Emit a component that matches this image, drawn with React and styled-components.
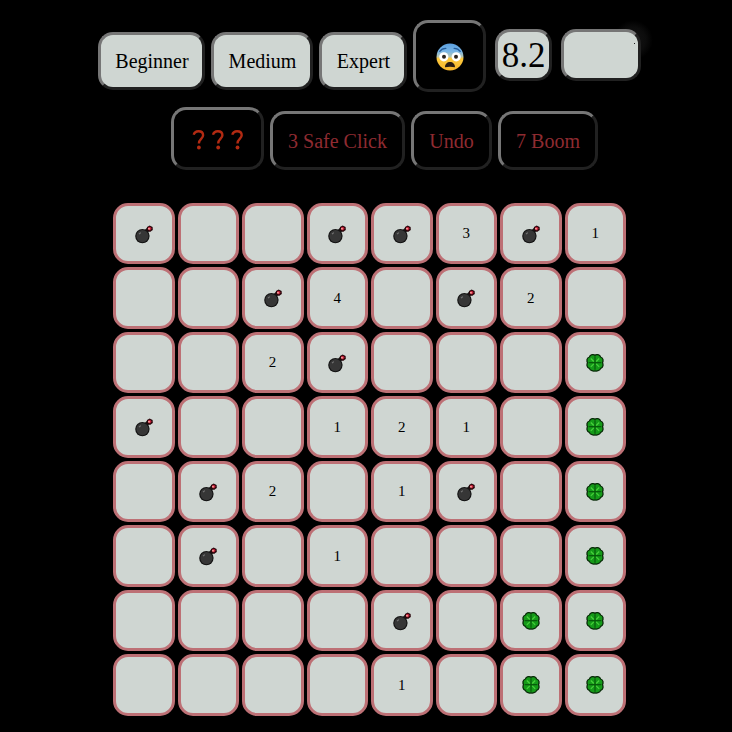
import React from 'react';
import styled, { createGlobalStyle, css } from 'styled-components';

const GlobalStyle = createGlobalStyle`
  body {
    margin: 0;
    background: #000;
    font-family: 'Liberation Serif', 'Times New Roman', serif;
    overflow: hidden;
  }
`;

const Page = styled.main`
  box-sizing: border-box;
  width: 732px;
  height: 732px;
  padding-top: 20px;
  overflow: hidden;
  background: #000;
`;

const bevel = css`
  box-sizing: border-box;
  border: 3px solid;
  border-color: #767676 #212121 #212121 #767676;
`;

const TopBar = styled.header`
  display: flex;
  align-items: flex-start;
  height: 87px;
  padding-left: 98px;
`;

const LevelButton = styled.button`
  ${bevel}
  width: ${(p) => p.$width}px;
  height: 58px;
  margin: 12px 6px 0 0;
  padding: 0 0 0 1px;
  border-radius: 15px;
  background: #cfd6d2;
  color: #000;
  font: 20px 'Liberation Serif', serif;
  white-space: nowrap;
`;

const FaceButton = styled.button`
  ${bevel}
  display: flex;
  align-items: center;
  justify-content: center;
  width: 73px;
  height: 72px;
  padding: 2px 0 0;
  border-radius: 15px;
  background: #000;
`;

const Display = styled.div`
  ${bevel}
  width: ${(p) => p.$width}px;
  height: 52px;
  margin: 9px 0 0 9px;
  border-radius: 15px;
  background: #cfd6d2;
  color: #000;
  font-size: 35px;
  line-height: 48px;
  text-align: center;
`;

const MarkedDisplay = styled(Display)`
  position: relative;

  &::after {
    content: '';
    position: absolute;
    top: 11px;
    right: 3px;
    width: 1px;
    height: 1px;
    background: #222;
  }

  &::before {
    content: '';
    position: absolute;
    z-index: -1;
    top: -12px;
    right: -15px;
    width: 40px;
    height: 40px;
    background: radial-gradient(circle, #141414 0, #0c0c0c 45%, transparent 70%);
  }
`;

const Header = styled.div`
  isolation: isolate;
`;

const ToolBar = styled.nav`
  display: flex;
  align-items: flex-end;
  gap: 6px;
  height: 63px;
  padding-left: 171px;
`;

const ToolButton = styled.button`
  ${bevel}
  display: flex;
  align-items: center;
  justify-content: center;
  width: ${(p) => p.$width}px;
  height: ${(p) => p.$height || 59}px;
  padding: 1px 0 0;
  border-radius: 15px;
  background: #000;
  color: #8f2b31;
  font: 20px 'Liberation Serif', serif;
  white-space: nowrap;
`;

const Board = styled.section`
  display: grid;
  grid-template-columns: repeat(8, 61.5px);
  grid-auto-rows: 61.45px;
  gap: 3.05px;
  margin: 33px 0 0 113px;
`;

const Cell = styled.div`
  box-sizing: border-box;
  display: flex;
  align-items: center;
  justify-content: center;
  padding-right: 0.5px;
  border: 3px solid #bd7075;
  border-radius: 15px;
  background: #cfd6d2;
  color: #000;
  font-size: 15px;
  line-height: 17px;
`;

const Icon = styled.svg`
  display: block;
  flex: none;
  overflow: visible;
`;

const Fearful = () => (
  <Icon width="28" height="28" viewBox="0 0 28 28">
    <defs>
      <linearGradient id="skin" x1="0" y1="0" x2="0" y2="1">
        <stop offset="0" stopColor="#5b9fe0" />
        <stop offset=".3" stopColor="#79b5e5" />
        <stop offset=".48" stopColor="#b5c6b4" />
        <stop offset=".56" stopColor="#fdc93c" />
        <stop offset="1" stopColor="#f9b62e" />
      </linearGradient>
    </defs>
    <circle cx="14" cy="14" r="13.5" fill="url(#skin)" />
    <path d="M3.8 8.4Q5.8 5.5 9.8 5.4M24.2 8.4Q22.2 5.5 18.2 5.4" fill="none" stroke="#235b9a" strokeWidth="1.3" strokeLinecap="round" />
    <circle cx="7.8" cy="13.8" r="4.6" fill="#fff" />
    <circle cx="20.2" cy="13.8" r="4.6" fill="#fff" />
    <circle cx="8" cy="13.8" r="2" fill="#2b2420" />
    <circle cx="20" cy="13.8" r="2" fill="#2b2420" />
    <path d="M9 24.2C9 21 11.2 19 14 19S19 21 19 24.2Q14 23.4 9 24.2Z" fill="#2b1c12" />
  </Icon>
);

const Questions = () => (
  <Icon width="54" height="22" viewBox="-0.5 -1.2 54 22">
    {[0, 19.3, 38.6].map((x) => (
      <g key={x} transform={`translate(${x} 0)`}>
        <path d="M2.2 5.6C2.8 3.2 4.6 2 7 2C10 2 11.6 3.6 11.6 6C11.6 9.6 7.4 9.8 7.4 14.2" fill="none" stroke="#b22a12" strokeWidth="2.4" />
        <circle cx="7.4" cy="18.3" r="1.9" fill="#b22a12" />
      </g>
    ))}
  </Icon>
);

const Bomb = () => (
  <Icon width="18" height="18" viewBox="0 -0.4 18 18">
    <path d="M10.5 6.8L13.5 3.8" stroke="#161616" strokeWidth="4" />
    <circle cx="7.4" cy="10.7" r="7.2" fill="#131313" />
    <circle cx="7.4" cy="10.7" r="6.1" fill="#363636" />
    <path d="M4 8.7L5.8 7.2" stroke="#777" strokeWidth="1.2" />
    <path d="M11.6 4.8L12 1.6L14.6 .2L17.6 1.6L17.8 4.6L15 6.6Z" fill="#29070b" />
    <path d="M13 2.2L15 1.3L16.7 3.2L15 5.2L13.2 4.2Z" fill="#c8203a" />
    <path d="M13.2 2.6h1.5v1.5h-1.5z" fill="#ffb7ad" />
  </Icon>
);

const Clover = () => (
  <Icon width="18" height="18" viewBox="0 0.3 18 18">
    <path
      d="M9 1.6Q10 .6 12 1Q14 1.4 14.7 3.3Q16.6 4 17 6Q17.2 8 16.4 9Q17.2 10 17 12Q16.6 14 14.7 14.7Q14 16.6 12 17Q10.2 17.8 9 17Q7.8 17.8 6 17Q4 16.6 3.3 14.7Q1.4 14 1 12Q.8 10 1.6 9Q.8 8 1 6Q1.4 4 3.3 3.3Q4 1.4 6 1Q8 .6 9 1.6Z"
      fill="#159a19"
      stroke="#082b08"
      strokeWidth="1.3"
    />
    <path d="M9 2.5V16M3 9H15" stroke="#075b0b" strokeWidth="1.2" />
    <path d="M4.8 4.8L7.8 7.8M13.2 4.8L10.2 7.8M4.8 13.2L7.8 10.2M13.2 13.2L10.2 10.2" stroke="#48d13c" strokeWidth="1.2" />
  </Icon>
);

const rows = ['B..BB3B1', '..B4.B2.', '..2B...C', 'B..121.C', '.B2.1B.C', '.B.1...C', '....B.CC', '....1.CC'];

const cellContent = (value) => {
  if (value === 'B') return <Bomb />;
  if (value === 'C') return <Clover />;
  return value === '.' ? null : value;
};

export default function App() {
  return (
    <Page>
      <GlobalStyle />
      <Header>
        <TopBar>
          <LevelButton $width={107}>Beginner</LevelButton>
          <LevelButton $width={102}>Medium</LevelButton>
          <LevelButton $width={88}>Expert</LevelButton>
          <FaceButton aria-label="Restart"><Fearful /></FaceButton>
          <Display $width={57}>8.2</Display>
          <MarkedDisplay $width={80} />
        </TopBar>
        <ToolBar>
          <ToolButton $width={93} $height={63} aria-label="Hint"><Questions /></ToolButton>
          <ToolButton $width={135}>3 Safe Click</ToolButton>
          <ToolButton $width={81}>Undo</ToolButton>
          <ToolButton $width={100}>7 Boom</ToolButton>
        </ToolBar>
      </Header>
      <Board>
        {rows.flatMap((row, y) =>
          [...row].map((value, x) => <Cell key={`${x}-${y}`}>{cellContent(value)}</Cell>)
        )}
      </Board>
    </Page>
  );
}
